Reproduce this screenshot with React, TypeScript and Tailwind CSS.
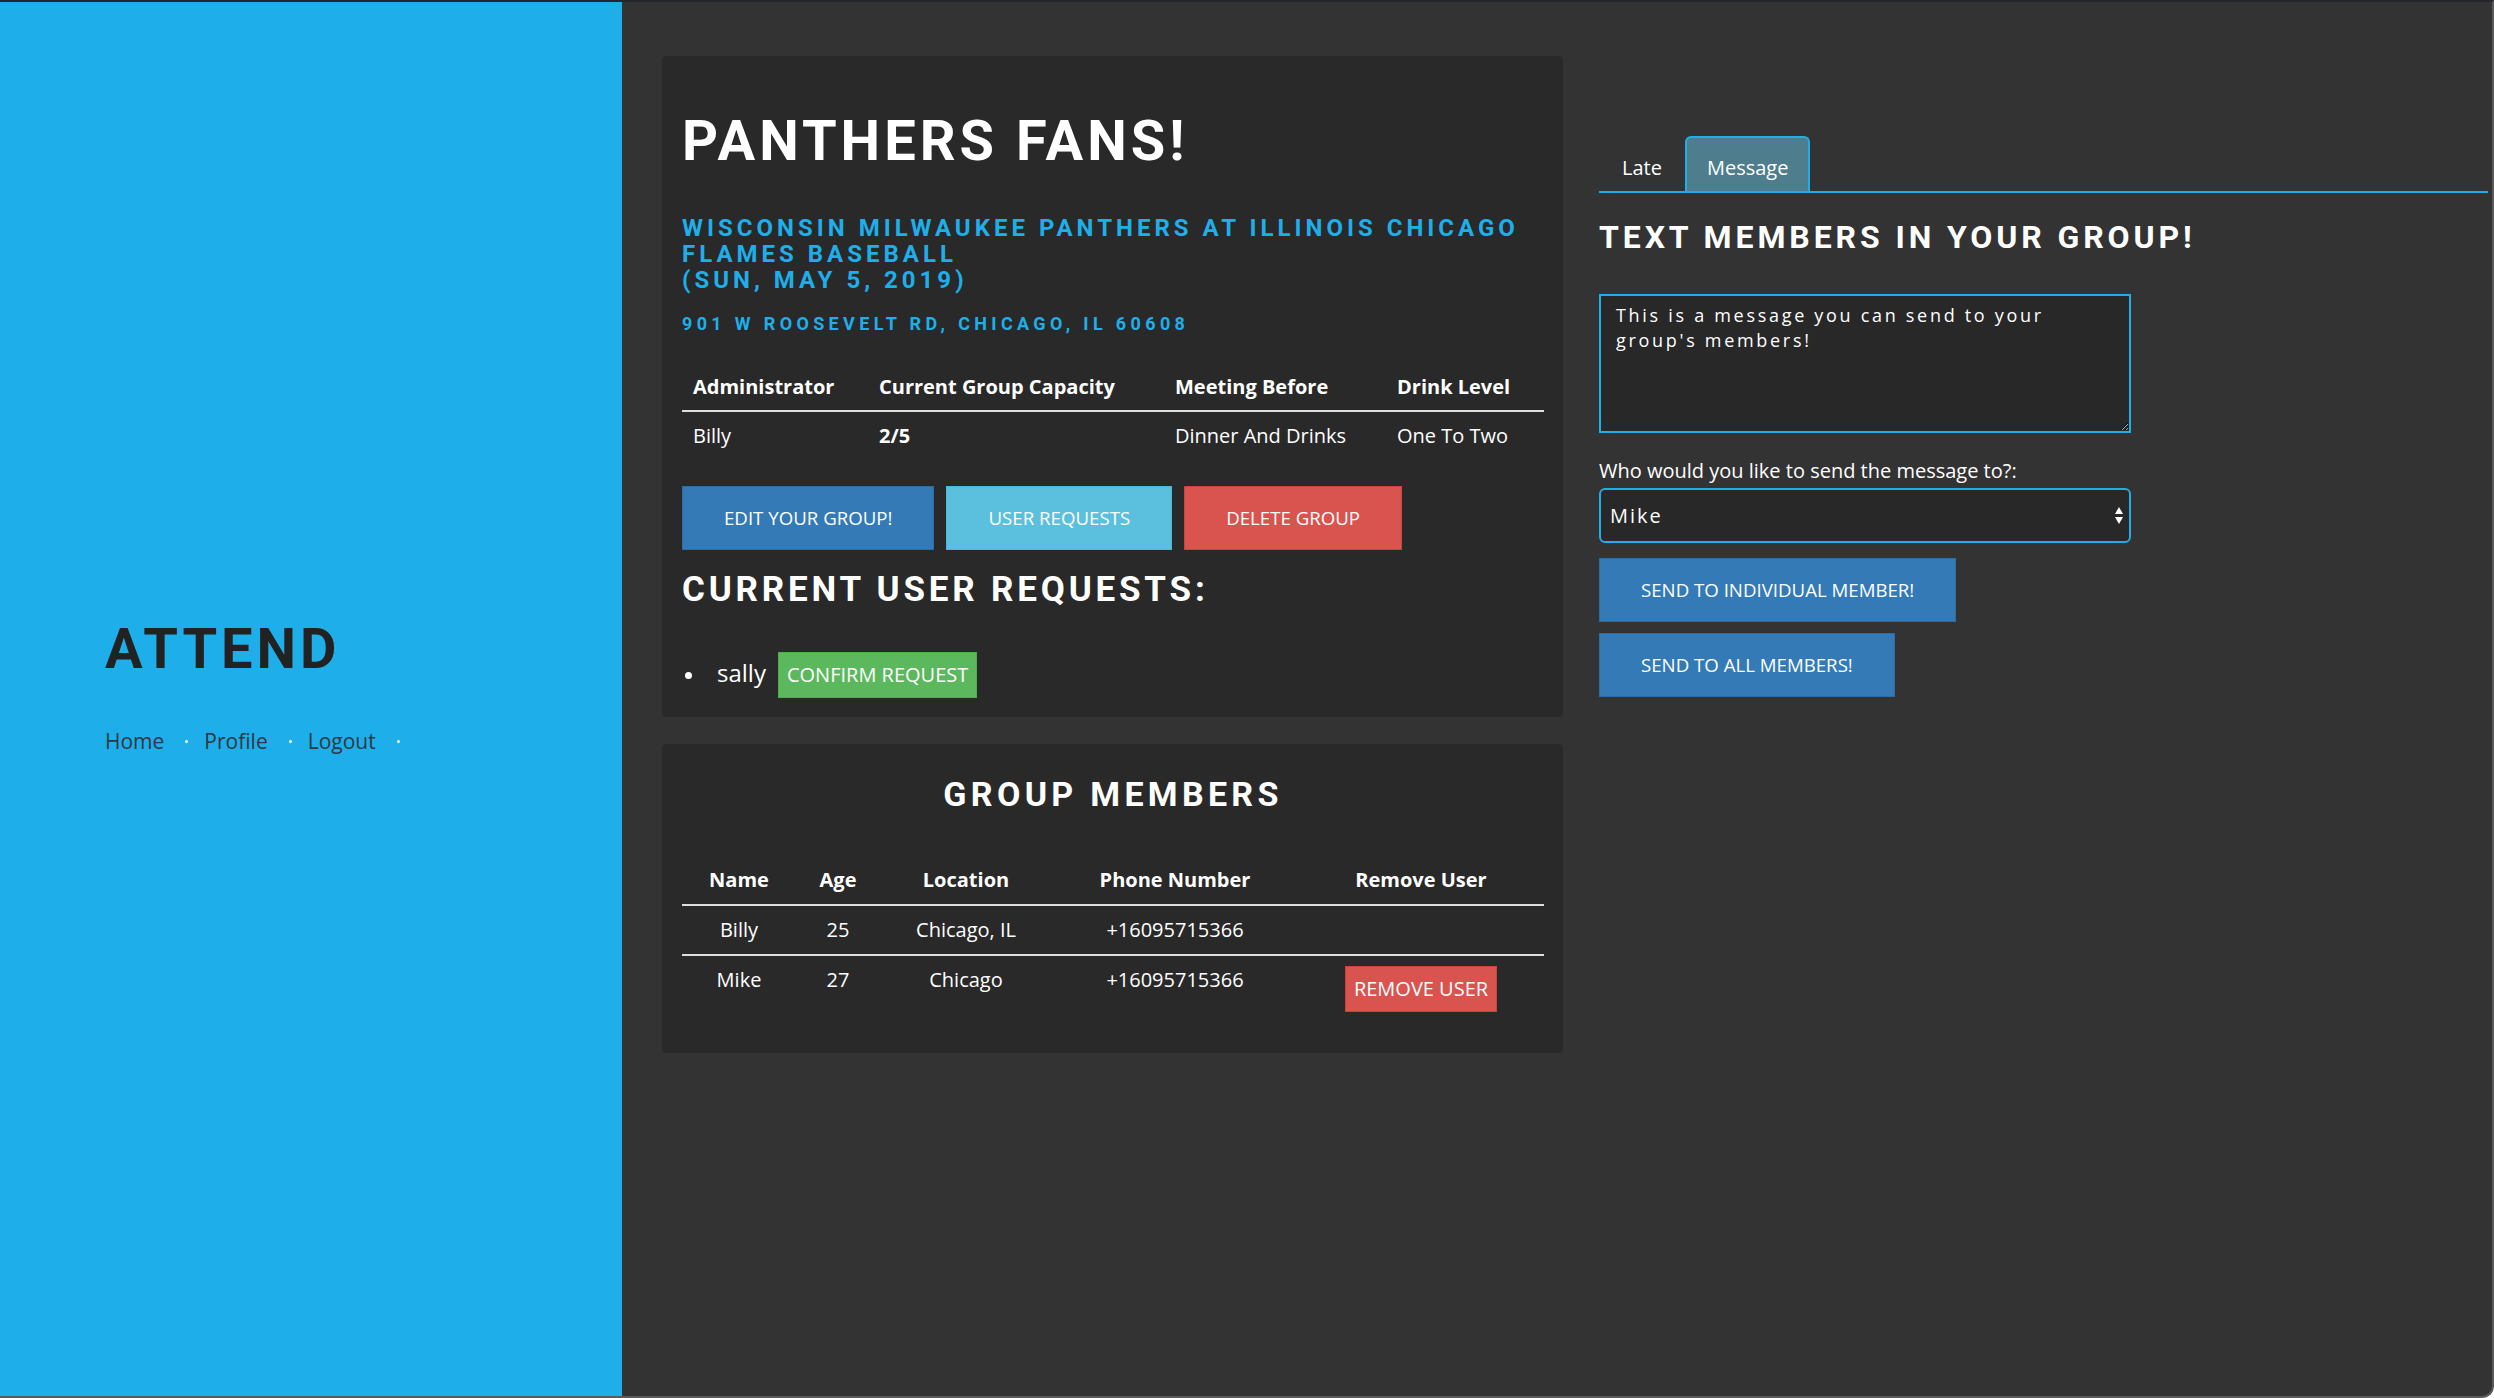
import React from "react";

const head = "font-['Roboto',sans-serif] font-bold uppercase";
const body = "font-['Open_Sans',sans-serif]";

function Btn({ children, color }: { children: React.ReactNode; color: string }) {
  return (
    <button
      className={`${body} ${color} border text-[18.67px] leading-[28px] text-white uppercase px-[41px] py-[17px] rounded-none`}
    >
      {children}
    </button>
  );
}

export default function App() {
  return (
    <div className="flex h-[1398px] w-[2494px] overflow-hidden border-t-2 border-r-2 border-b-2 border-t-[#23272b] border-r-[#5a5a5a] border-b-[#5a5a5a] rounded-br-[12px] bg-[#333333]">
      {/* Sidebar */}
      <aside className="w-[622px] shrink-0 bg-[#1EAFEA] pl-[105px] pt-[619px]">
        <h1 className={`${head} text-[56px] leading-none tracking-[4px] text-[#222222]`}>Attend</h1>
        <nav className={`${body} mt-[50px] flex items-center text-[21px] leading-[28px] text-[#2c3944]`}>
          {["Home", "Profile", "Logout"].map((t) => (
            <span key={t} className="flex items-center">
              <span>{t}</span>
              <span className="ml-[21px] mr-[16px] h-[3px] w-[3px] rounded-full bg-white" />
            </span>
          ))}
        </nav>
      </aside>

      {/* Main */}
      <main className="flex flex-1 gap-[36px] pl-[40px] pr-[4px] pt-[54px]">
        {/* Left column */}
        <div className="flex w-[901px] shrink-0 flex-col">
          {/* Card 1 */}
          <section className="rounded-[4px] bg-[#292929] pl-[20px] pr-[19px] pt-[57px] pb-[19px] text-white">
            <h1 className={`${head} text-[56px] leading-none tracking-[4px] text-white`}>Panthers Fans!</h1>
            <h3 className={`${head} mt-[46px] text-[24px] leading-[26px] tracking-[4px] text-[#1EAFEA] whitespace-nowrap`}>
              <span className="block">Wisconsin Milwaukee Panthers at Illinois Chicago</span>
              <span className="block">Flames Baseball</span>
              <span className="block">(Sun, May 5, 2019)</span>
            </h3>
            <h4 className={`${head} mt-[22px] text-[18px] leading-none tracking-[4.35px] text-[#1EAFEA] whitespace-nowrap`}>
              901 W Roosevelt Rd, Chicago, IL 60608
            </h4>
            <table className={`${body} mt-[28px] w-[862px] table-fixed border-collapse text-[20px] leading-[28px]`}>
              <colgroup>
                <col className="w-[186px]" />
                <col className="w-[296px]" />
                <col className="w-[222px]" />
                <col className="w-[158px]" />
              </colgroup>
              <thead>
                <tr className="border-b-2 border-[#dddddd]">
                  <th className="pl-[11px] pt-[12px] pb-[9px] text-left font-bold">Administrator</th>
                  <th className="pl-[11px] pt-[12px] pb-[9px] text-left font-bold">Current Group Capacity</th>
                  <th className="pl-[11px] pt-[12px] pb-[9px] text-left font-bold">Meeting Before</th>
                  <th className="pl-[11px] pt-[12px] pb-[9px] text-left font-bold">Drink Level</th>
                </tr>
              </thead>
              <tbody>
                <tr>
                  <td className="pl-[11px] pt-[10px] pb-[9px]">Billy</td>
                  <td className="pl-[11px] pt-[10px] pb-[9px] font-bold">2/5</td>
                  <td className="pl-[11px] pt-[10px] pb-[9px]">Dinner And Drinks</td>
                  <td className="pl-[11px] pt-[10px] pb-[9px]">One To Two</td>
                </tr>
              </tbody>
            </table>
            <div className="mt-[27px] flex gap-[12px]">
              <Btn color="bg-[#337ab7] border-[#2e6da4]">Edit Your Group!</Btn>
              <Btn color="bg-[#5bc0de] border-[#46b8da]">User Requests</Btn>
              <Btn color="bg-[#d9534f] border-[#d43f3a]">Delete Group</Btn>
            </div>
            <h2 className={`${head} mt-[22px] text-[35px] leading-none tracking-[3.8px] text-white`}>Current User Requests:</h2>
            <ul className="mt-[45px]">
              <li className="flex items-center">
                <span className="ml-[3px] mr-[25px] h-[7px] w-[7px] rounded-full bg-white" />
                <span className="flex items-baseline">
                  <span className={`${body} text-[24px] leading-[28px] text-white`}>sally</span>
                  <button className={`${body} ml-[12px] border border-[#4cae4c] bg-[#5cb85c] px-[8px] py-[8px] text-[20px] leading-[28px] text-white uppercase`}>
                    Confirm Request
                  </button>
                </span>
              </li>
            </ul>
          </section>

          {/* Card 2 */}
          <section className="mt-[27px] rounded-[4px] bg-[#292929] pl-[20px] pr-[19px] pt-[33px] pb-[30px] text-white">
            <h2 className={`${head} text-center text-[34px] leading-none tracking-[4.3px] text-white`}>Group Members</h2>
            <table className={`${body} mt-[44px] w-[862px] table-fixed border-collapse text-center text-[20px] leading-[28px]`}>
              <colgroup>
                <col className="w-[114px]" />
                <col className="w-[84px]" />
                <col className="w-[172px]" />
                <col className="w-[246px]" />
                <col className="w-[246px]" />
              </colgroup>
              <thead>
                <tr className="border-b-2 border-[#dddddd]">
                  <th className="pt-[11px] pb-[10px] font-bold">Name</th>
                  <th className="pt-[11px] pb-[10px] font-bold">Age</th>
                  <th className="pt-[11px] pb-[10px] font-bold">Location</th>
                  <th className="pt-[11px] pb-[10px] font-bold">Phone Number</th>
                  <th className="pt-[11px] pb-[10px] font-bold">Remove User</th>
                </tr>
              </thead>
              <tbody>
                <tr className="border-b-2 border-[#dddddd]">
                  <td className="pt-[10px] pb-[10px] align-top">Billy</td>
                  <td className="pt-[10px] pb-[10px] align-top">25</td>
                  <td className="pt-[10px] pb-[10px] align-top">Chicago, IL</td>
                  <td className="pt-[10px] pb-[10px] align-top">+16095715366</td>
                  <td className="pt-[10px] pb-[10px] align-top"></td>
                </tr>
                <tr>
                  <td className="pt-[10px] pb-[11px] align-top">Mike</td>
                  <td className="pt-[10px] pb-[11px] align-top">27</td>
                  <td className="pt-[10px] pb-[11px] align-top">Chicago</td>
                  <td className="pt-[10px] pb-[11px] align-top">+16095715366</td>
                  <td className="pt-[10px] pb-[11px] align-top">
                    <button className={`${body} border border-[#d43f3a] bg-[#d9534f] px-[8px] py-[8px] text-[20px] leading-[28px] text-white uppercase`}>
                      Remove User
                    </button>
                  </td>
                </tr>
              </tbody>
            </table>
          </section>
        </div>

        {/* Right column */}
        <div className="flex-1 pt-[80px] text-white">
          <div className={`${body} flex border-b-2 border-[#1EAFEA] text-[20px] leading-[28px]`}>
            <div className="border-2 border-b-0 border-transparent px-[21px] pt-[16px] pb-[9px]">Late</div>
            <div className="rounded-t-[6px] border-2 border-b-0 border-[#1EAFEA] bg-[#4e7d8d] px-[20px] pt-[16px] pb-[9px]">Message</div>
          </div>
          <h2 className={`${head} mt-[28px] text-[32px] leading-none tracking-[3.9px] text-white`}>Text Members In Your Group!</h2>
          <textarea
            className={`${body} mt-[41px] block h-[139px] w-[532px] border-2 border-[#1EAFEA] bg-[#282828] px-[15px] pt-[7px] text-[18px] leading-[25px] tracking-[2.7px] text-white outline-none`}
            defaultValue={"This is a message you can send to your group's members!"}
          />
          <label className={`${body} mt-[24px] block text-[20px] leading-[28px] text-white`}>
            Who would you like to send the message to?:
          </label>
          <div className="relative mt-[3px] w-[532px]">
            <select
              className={`${body} block h-[55px] w-[532px] appearance-none rounded-[6px] border-2 border-[#1EAFEA] bg-[#282828] pl-[9px] text-[20px] tracking-[2px] text-white outline-none`}
              defaultValue="Mike"
            >
              <option>Mike</option>
              <option>Billy</option>
            </select>
            <svg className="pointer-events-none absolute right-[8px] top-[19px]" width="8" height="17" viewBox="0 0 8 17">
              <path d="M4 0 L8 7 L0 7 Z" fill="#ffffff" />
              <path d="M0 10 L8 10 L4 17 Z" fill="#ffffff" />
            </svg>
          </div>
          <div className="mt-[15px] flex flex-col items-start gap-[11px]">
            <Btn color="bg-[#337ab7] border-[#2e6da4]">Send To Individual Member!</Btn>
            <Btn color="bg-[#337ab7] border-[#2e6da4]">Send To All Members!</Btn>
          </div>
        </div>
      </main>
    </div>
  );
}
